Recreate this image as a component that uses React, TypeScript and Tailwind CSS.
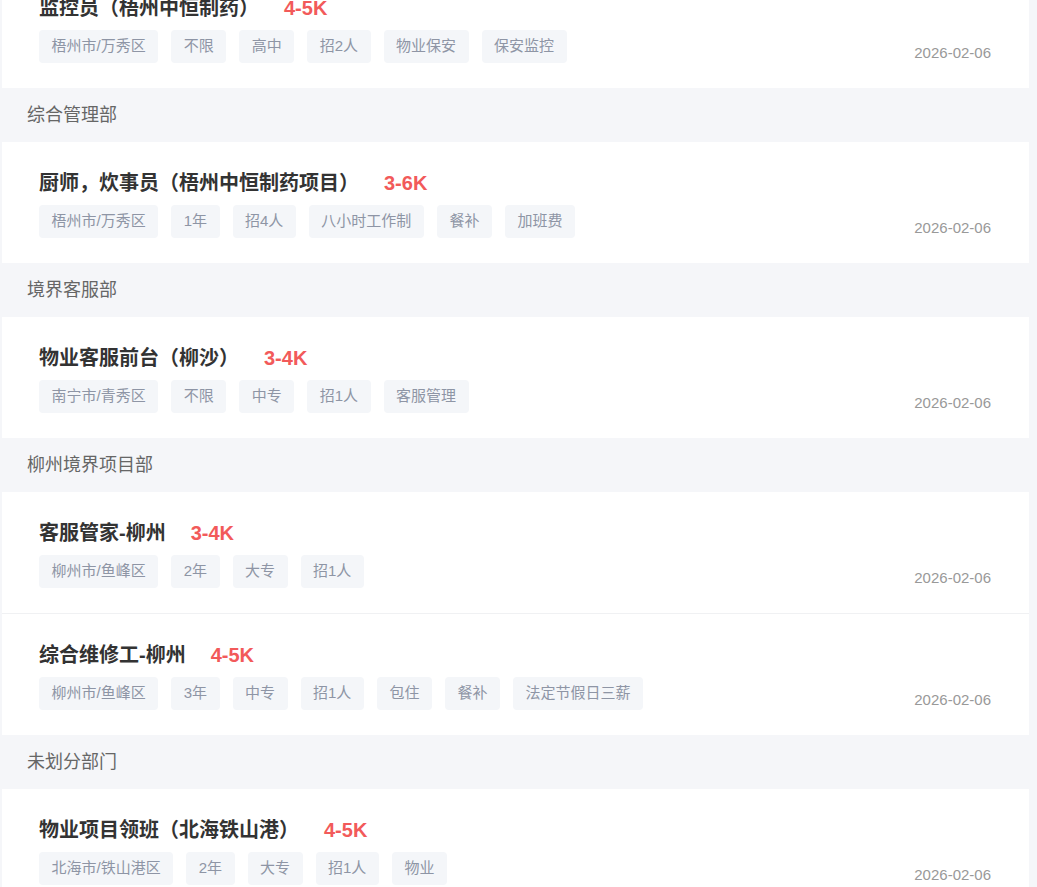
import React from 'react';

interface Job {
  title: string;
  salary: string;
  tags: string[];
  date: string;
}

interface Section {
  name?: string;
  jobs: Job[];
}

const sections: Section[] = [
  {
    jobs: [
      {
        title: '监控员（梧州中恒制药）',
        salary: '4-5K',
        tags: ['梧州市/万秀区', '不限', '高中', '招2人', '物业保安', '保安监控'],
        date: '2026-02-06',
      },
    ],
  },
  {
    name: '综合管理部',
    jobs: [
      {
        title: '厨师，炊事员（梧州中恒制药项目）',
        salary: '3-6K',
        tags: ['梧州市/万秀区', '1年', '招4人', '八小时工作制', '餐补', '加班费'],
        date: '2026-02-06',
      },
    ],
  },
  {
    name: '境界客服部',
    jobs: [
      {
        title: '物业客服前台（柳沙）',
        salary: '3-4K',
        tags: ['南宁市/青秀区', '不限', '中专', '招1人', '客服管理'],
        date: '2026-02-06',
      },
    ],
  },
  {
    name: '柳州境界项目部',
    jobs: [
      {
        title: '客服管家-柳州',
        salary: '3-4K',
        tags: ['柳州市/鱼峰区', '2年', '大专', '招1人'],
        date: '2026-02-06',
      },
      {
        title: '综合维修工-柳州',
        salary: '4-5K',
        tags: ['柳州市/鱼峰区', '3年', '中专', '招1人', '包住', '餐补', '法定节假日三薪'],
        date: '2026-02-06',
      },
    ],
  },
  {
    name: '未划分部门',
    jobs: [
      {
        title: '物业项目领班（北海铁山港）',
        salary: '4-5K',
        tags: ['北海市/铁山港区', '2年', '大专', '招1人', '物业'],
        date: '2026-02-06',
      },
    ],
  },
];

const JobItem: React.FC<{ job: Job; first: boolean }> = ({ job, first }) => (
  <div className={`flex items-end justify-between pl-[37px] pr-[38px] pt-[28px] pb-[25px] ${first ? '' : 'border-t border-[#f0f1f3]'}`}>
    <div>
      <div className="flex items-center h-[26px]">
        <span className="text-[20px] font-bold text-[#333333] leading-[26px]">{job.title}</span>
        <span className="ml-[25px] text-[20px] font-bold text-[#f25a5a] leading-[26px]">{job.salary}</span>
      </div>
      <div className="flex gap-[13px] mt-[9px]">
        {job.tags.map((t) => (
          <span key={t} className="h-[33px] px-[12.5px] flex items-center rounded-[4px] bg-[#f4f6f9] text-[15px] text-[#8e95a5]">
            {t}
          </span>
        ))}
      </div>
    </div>
    <span className="text-[15px] leading-5 text-[#999999]">{job.date}</span>
  </div>
);

export default function App() {
  return (
    <div
      className="h-[887px] overflow-hidden bg-[#f5f6f9] pl-[2px] pr-[8px]"
      style={{ fontFamily: '"Liberation Sans", "Noto Sans CJK SC", sans-serif' }}
    >
      <div className="-mt-[33px]">
        {sections.map((s, i) => (
          <div key={i}>
            {s.name && (
              <div className="h-[54px] flex items-center pl-[25px] text-[18px] text-[#666666]">{s.name}</div>
            )}
            <div className="bg-white">
              {s.jobs.map((j, k) => (
                <JobItem key={k} job={j} first={k === 0} />
              ))}
            </div>
          </div>
        ))}
      </div>
    </div>
  );
}
